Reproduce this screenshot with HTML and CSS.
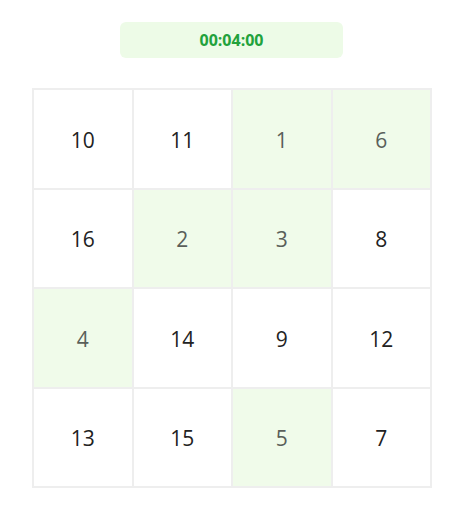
FILE: index.html
```html
<!DOCTYPE html>
<html>
<head>
<meta charset="utf-8">
<link rel="stylesheet" href="styles.css">
</head>
<body>
<div class="app">
  <div class="timer-row">
    <div class="timer">00:04:00</div>
  </div>
  <div class="board">
    <div class="cell">10</div>
    <div class="cell">11</div>
    <div class="cell done">1</div>
    <div class="cell done">6</div>
    <div class="cell">16</div>
    <div class="cell done">2</div>
    <div class="cell done">3</div>
    <div class="cell">8</div>
    <div class="cell done">4</div>
    <div class="cell">14</div>
    <div class="cell">9</div>
    <div class="cell">12</div>
    <div class="cell">13</div>
    <div class="cell">15</div>
    <div class="cell done">5</div>
    <div class="cell">7</div>
  </div>
</div>
</body>
</html>
```

FILE: styles.css
```css
html, body {
  margin: 0;
  padding: 0;
  background: #ffffff;
}
body {
  font-family: "Open Sans", "Noto Sans", sans-serif;
}
.app {
  width: 400px;
  margin-left: 32px;
  padding-top: 22px;
}
.timer-row {
  display: flex;
  justify-content: center;
  margin-bottom: 30px;
}
.timer {
  width: 223px;
  height: 36px;
  margin-left: -1px;
  border-radius: 6px;
  background: #edfbe7;
  color: #22a23c;
  font-weight: 700;
  font-size: 16px;
  display: flex;
  align-items: center;
  justify-content: center;
}
.board {
  width: 400px;
  height: 400px;
  box-sizing: border-box;
  padding: 2px;
  gap: 2px;
  background: #eeeeee;
  display: grid;
  grid-template-columns: repeat(4, 1fr);
  grid-template-rows: repeat(4, 1fr);
}
.cell {
  background: #ffffff;
  display: flex;
  align-items: center;
  justify-content: center;
  padding-top: 2px;
  font-size: 21px;
  color: #222222;
}
.cell.done {
  background: #f0fbea;
  color: #5a5f5a;
}
```
